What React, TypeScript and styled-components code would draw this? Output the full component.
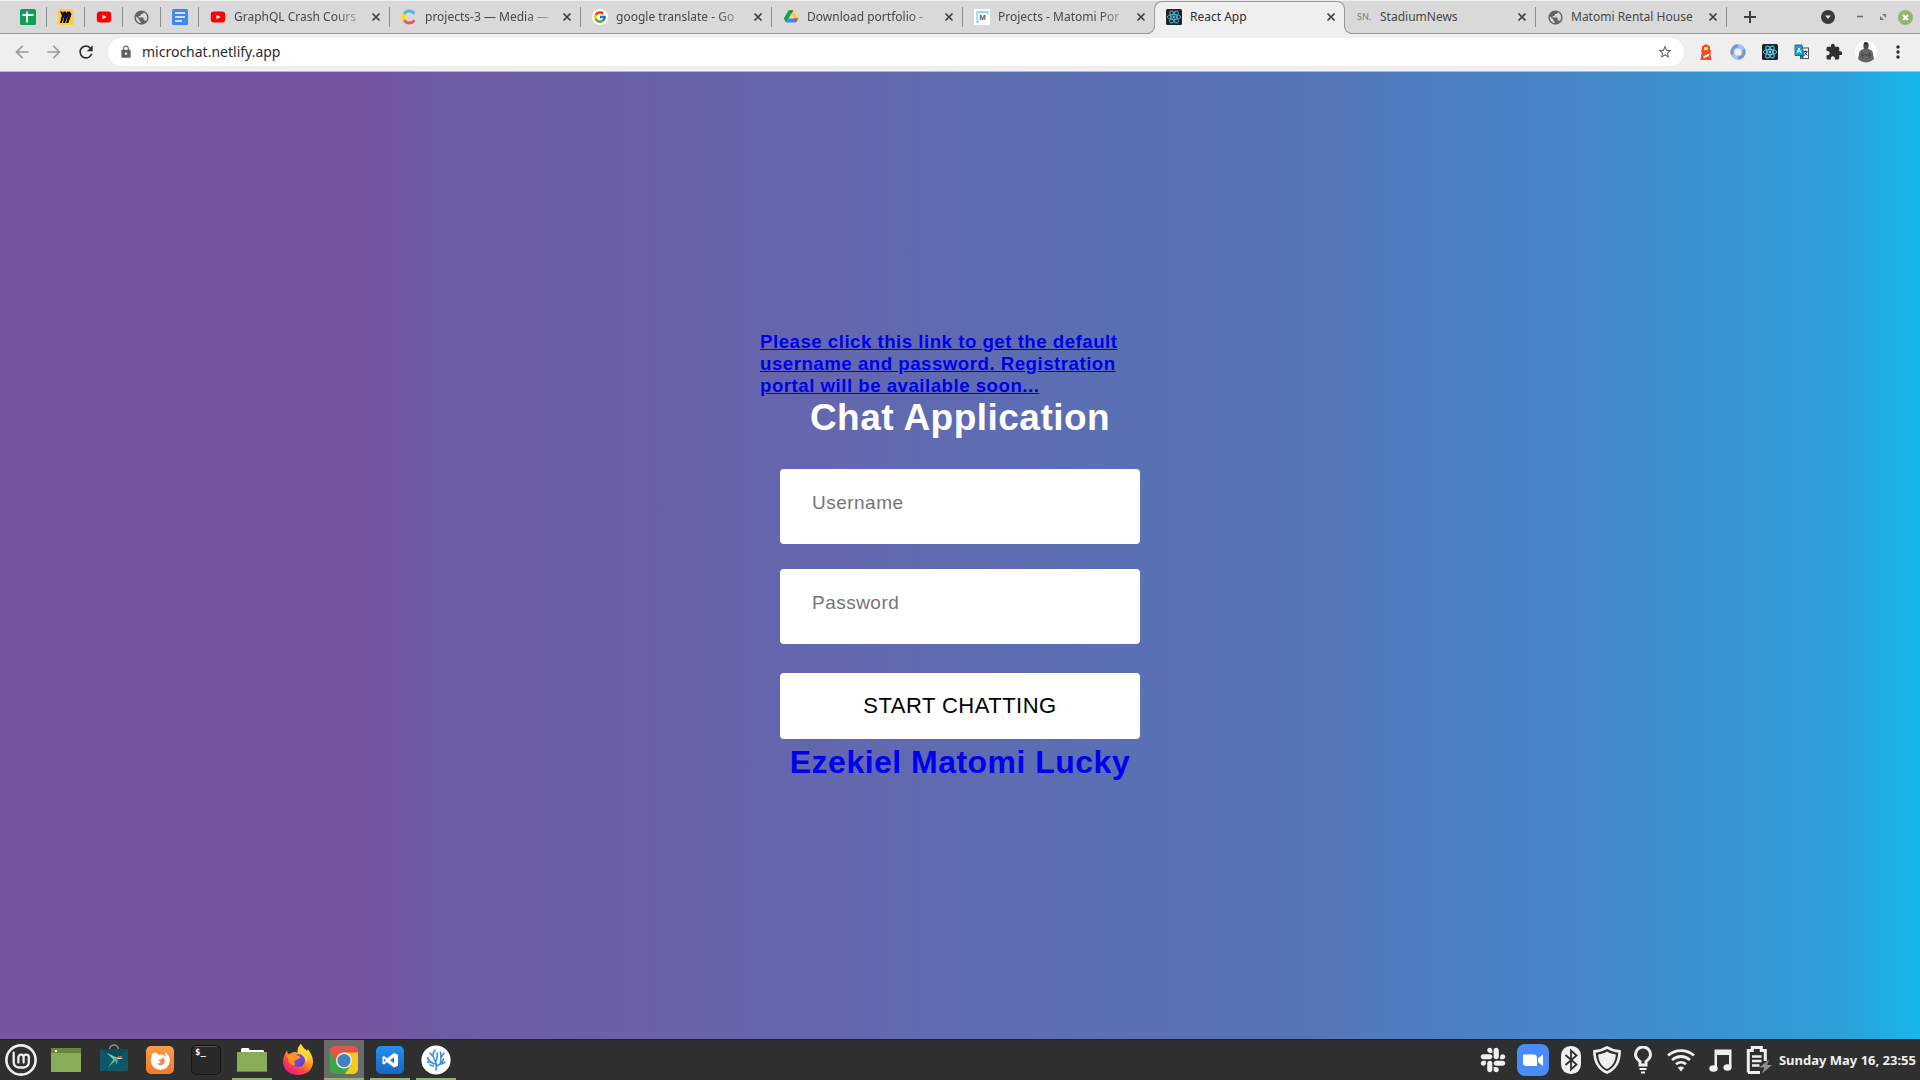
import React from "react";
import styled, { createGlobalStyle, css } from "styled-components";
import {
  MdArrowBack,
  MdArrowForward,
  MdRefresh,
  MdLock,
  MdStarBorder,
  MdExtension,
  MdMoreVert,
  MdPublic,
} from "react-icons/md";
import { FaSlack } from "react-icons/fa";
import { FcGoogle } from "react-icons/fc";

const uiFont = `"Noto Sans", "Open Sans", sans-serif`;
const pageFont = `"Liberation Sans", Arial, sans-serif`;

const GlobalStyle = createGlobalStyle`
  *, *::before, *::after { box-sizing: border-box; }
  body { margin: 0; font-family: ${uiFont}; }
  button, input { font: inherit; color: inherit; letter-spacing: inherit; margin: 0; }
  button { border: 0; padding: 0; background: none; cursor: pointer; }
  svg { display: block; flex: none; }
`;

const Screen = styled.div`
  min-height: 100vh;
  display: grid;
  grid-template-rows: auto 1fr auto;
`;

/* ---------- browser chrome ---------- */

const TabStrip = styled.header`
  display: flex;
  align-items: stretch;
  height: 34px;
  padding: 0 7px 0 9px;
  background: #d9d9d9;
  border-top: 1px solid #efefef;
  border-bottom: 1px solid #999;
`;

const Tabs = styled.nav`
  display: flex;
  flex: 0 1 auto;
  min-width: 0;
`;

const divider = css`
  &::after {
    content: "";
    width: 1px;
    height: 20px;
    background: #8c8c8c;
    flex: none;
  }
`;

const PinnedTab = styled.button`
  width: 38px;
  display: flex;
  align-items: center;
  & > span {
    flex: 1;
    display: flex;
    justify-content: center;
  }
  ${divider}
`;

const Tab = styled.div<{ $active?: boolean; $divided?: boolean }>`
  position: relative;
  flex: 0 1 191px;
  width: 191px;
  min-width: 0;
  display: flex;
  align-items: center;
  color: #484848;
  ${(p) => p.$divided && divider}
  ${(p) =>
    p.$active &&
    css`
      margin-bottom: -1px;
      padding-bottom: 2px;
      color: #2e2e2e;
      background: #efefef;
      border: 1px solid #999;
      border-bottom: 0;
      border-radius: 8px 8px 0 0;
    `}
`;

const TabFoot = styled.i<{ $side: "left" | "right" }>`
  position: absolute;
  bottom: 0;
  width: 8px;
  height: 8px;
  border-bottom: 1px solid #999;
  background: #d9d9d9;
  ${(p) =>
    p.$side === "left"
      ? css`
          left: -8px;
          border-right: 1px solid #999;
          border-bottom-right-radius: 8px;
          box-shadow: 2px 2px 0 0 #efefef;
          clip-path: inset(0 -1px 0 0);
        `
      : css`
          right: -8px;
          border-left: 1px solid #999;
          border-bottom-left-radius: 8px;
          box-shadow: -2px 2px 0 0 #efefef;
          clip-path: inset(0 0 0 -1px);
        `}
`;

const TabButton = styled.button`
  flex: 1;
  min-width: 0;
  height: 100%;
  display: flex;
  align-items: center;
  gap: 8px;
  padding-left: 11px;
  text-align: left;
`;

const TabTitle = styled.span<{ $fade?: boolean }>`
  flex: 1;
  min-width: 0;
  overflow: hidden;
  white-space: nowrap;
  font-size: 12px;
  line-height: 18px;
  ${(p) => p.$fade && css`mask-image: linear-gradient(90deg, #000 78%, transparent 102%);`}
`;

const CloseButton = styled.button`
  width: 16px;
  height: 16px;
  margin: 0 5px 0 4px;
  display: grid;
  place-items: center;
  color: #3d3d3d;
`;

const Favicon = styled.span`
  width: 16px;
  height: 16px;
  flex: none;
  display: grid;
  place-items: center;
`;

const Monogram = styled.span`
  font: 9px/16px Lato, sans-serif;
  color: #777;
`;

const NewTab = styled.button`
  width: 46px;
  display: grid;
  place-items: center;
  color: #3d3d3d;
`;

const WindowControls = styled.div`
  margin-left: auto;
  display: flex;
  align-items: center;
  gap: 8px;
`;

const ControlButton = styled.button<{ $wide?: boolean }>`
  width: 15px;
  height: 16px;
  margin-right: ${(p) => (p.$wide ? "9px" : "0")};
  display: grid;
  place-items: center;
  color: #6a6a6a;
`;

const Toolbar = styled.div`
  display: flex;
  align-items: center;
  height: 38px;
  padding: 0 6px 1px;
  background: #efefef;
  border-bottom: 1px solid #b9b9b9;
`;

const ToolButton = styled.button<{ $muted?: boolean }>`
  width: 32px;
  height: 28px;
  display: grid;
  place-items: center;
  color: ${(p) => (p.$muted ? "#9c9c9c" : "#2f2f2f")};
`;

const AddressBar = styled.label`
  flex: 1;
  display: flex;
  align-items: center;
  gap: 9px;
  height: 28px;
  margin: 0 6px;
  padding: 0 11px;
  border-radius: 14px;
  background: #fff;
  color: #5f6063;
`;

const AddressInput = styled.input`
  flex: 1;
  min-width: 0;
  border: 0;
  outline: 0;
  padding: 0;
  background: transparent;
  font-size: 14px;
  line-height: 20px;
  color: #2b2b2b;
`;

/* ---------- page ---------- */

const Page = styled.main`
  display: flex;
  align-items: center;
  justify-content: center;
  background: linear-gradient(
    90deg,
    rgb(117, 84, 160) 0%,
    rgb(117, 84, 160) 19%,
    rgb(110, 92, 165) 23%,
    rgb(103, 100, 172) 38%,
    rgb(95, 107, 177) 50%,
    rgb(85, 117, 183) 68%,
    rgb(79, 124, 192) 73%,
    rgb(70, 135, 200) 82%,
    rgb(44, 160, 218) 96%,
    rgb(22, 184, 235) 100%
  );
`;

const Panel = styled.section`
  width: 400px;
  font-family: ${pageFont};
  font-size: 16px;
  letter-spacing: 0.03em;
`;

const Notice = styled.h3`
  margin: 0;
  line-height: 22px;
  a {
    color: #0000ee;
  }
`;

const Title = styled.h1`
  margin: 0 0 30px;
  font-size: 37px;
  line-height: 42px;
  color: #fff;
  text-align: center;
`;

const Form = styled.form`
  display: flex;
  flex-direction: column;
  padding: 0 20px;
  gap: 25px;
`;

const Field = styled.input`
  height: 75px;
  padding: 0 32px 6px;
  border: 0;
  border-radius: 4px;
  background: #fff;
  font-size: 19px;
  outline: 0;
  &::placeholder {
    color: #757575;
  }
`;

const Submit = styled.button`
  height: 66px;
  margin-top: 4px;
  border-radius: 4px;
  background: #fff;
  color: #000;
  font-size: 22px;
`;

const Author = styled.h1`
  margin: 5px 0 0;
  font-size: 32px;
  line-height: 37px;
  text-align: center;
  a {
    color: #0000ee;
    text-decoration: none;
  }
`;

/* ---------- desktop panel ---------- */

const Taskbar = styled.footer`
  display: flex;
  justify-content: space-between;
  height: 41px;
  padding: 0 4px 0 1px;
  background: #2f2f2f;
  border-top: 1px solid #232323;
`;

const Launchers = styled.div`
  display: flex;
  gap: 6px;
`;

const MenuGroup = styled.div`
  display: flex;
  gap: 5px;
  margin-right: 2px;
`;

const Launcher = styled.button<{ $running?: boolean; $focused?: boolean }>`
  width: 40px;
  display: grid;
  place-items: center;
  background: ${(p) => (p.$focused ? "#6b6b6b" : "transparent")};
  border-top: 2px solid transparent;
  border-bottom: 2px solid ${(p) => (p.$running ? "#92b372" : "transparent")};
`;

const Tray = styled.div`
  display: flex;
  align-items: center;
  gap: 10px;
`;

const TrayButton = styled.button`
  color: #efefef;
`;

const Clock = styled.time`
  margin-left: -4px;
  font-size: 13px;
  font-weight: 700;
  line-height: 18px;
  color: #efefef;
  white-space: nowrap;
`;

/* ---------- favicons ---------- */

const SheetsIcon = () => (
  <svg width="16" height="16" viewBox="0 0 16 16">
    <rect width="16" height="16" rx="1.5" fill="#109d58" />
    <path d="M7 2.5v11M2.5 6h11" stroke="#fff" strokeWidth="2" />
  </svg>
);

const MiroIcon = () => (
  <svg width="16" height="16" viewBox="0 0 16 16">
    <rect width="16" height="16" rx="1.5" fill="#ffd02f" />
    <path
      d="M2 2.5h2.2l1 2 .2-2h2.2l1.3 1.8.1-1.8h2.6l2 2.6L10.3 14H8.1l1.9-7.5L7 14H5l1.5-7.8L3.8 14H1.9l2-7.5z"
      fill="#0b0a33"
    />
  </svg>
);

const YoutubeIcon = () => (
  <svg width="16" height="16" viewBox="0 0 16 16">
    <rect x="0.8" y="2.5" width="14.4" height="11" rx="3" fill="#f00" />
    <path d="M6.5 5.7v4.6l4-2.3z" fill="#fff" />
  </svg>
);

const DocsIcon = () => (
  <svg width="16" height="16" viewBox="0 0 16 16">
    <rect width="16" height="16" rx="1.5" fill="#4285f4" />
    <path d="M3 4h10M3 8h10M3 12h7" stroke="#fff" strokeWidth="1.6" />
  </svg>
);

const GlobeIcon = () => <MdPublic size={17} color="#5f6368" />;

const ContentfulIcon = () => (
  <svg width="16" height="16" viewBox="0 0 16 16" fill="none" strokeWidth="3">
    <path d="M4 12.2a6 6 0 0 1 0-8.4" stroke="#ffda00" />
    <path d="M4 3.8a6 6 0 0 1 8.5 0" stroke="#4fb5e1" strokeLinecap="round" />
    <path d="M4 12.2a6 6 0 0 0 8.5 0" stroke="#f0575a" strokeLinecap="round" />
  </svg>
);

const GoogleIcon = () => (
  <svg width="16" height="16" viewBox="0 0 16 16">
    <circle cx="8" cy="8" r="8" fill="#fff" />
    <FcGoogle x="1" y="1" size={14} />
  </svg>
);

const DriveIcon = () => (
  <svg width="16" height="16" viewBox="0 0 16 16">
    <path d="M5.6 1.2.8 9.600l2.300 4 5-8.600z" fill="#0f9d58" />
    <path d="M5.6 1.2h4.800l4.900 8.400h-4.700z" fill="#ffcd40" />
    <path d="M5.300 9.600h10l-2.400 4H3.100z" fill="#4285f4" />
    <path d="M10.600 9.600h4.700l-2.400 4z" fill="#ea4335" />
    <path d="M5.600 1.200h4.800L8 5.200z" fill="#188038" />
  </svg>
);

const MatomiIcon = () => (
  <svg width="16" height="16" viewBox="0 0 16 16">
    <rect width="16" height="16" fill="#fff" />
    <path d="M5 13H3V3h11v2" stroke="#6edad8" strokeWidth="1.3" fill="none" />
    <text x="8.500" y="10.500" fontSize="7" fontWeight="700" textAnchor="middle" fill="#555">M</text>
  </svg>
);

const ReactTile = ({ tint = "#4cb8d6" }: { tint?: string }) => (
  <svg width="16" height="16" viewBox="0 0 16 16" fill="none">
    <rect width="16" height="16" rx="1.5" fill="#20232a" />
    <g stroke={tint} strokeWidth="0.9">
      <ellipse cx="8" cy="8" rx="6.700" ry="2.600" />
      <ellipse cx="8" cy="8" rx="6.700" ry="2.600" transform="rotate(60 8 8)" />
      <ellipse cx="8" cy="8" rx="6.700" ry="2.600" transform="rotate(120 8 8)" />
    </g>
    <circle cx="8" cy="8" r="1.400" fill={tint} />
  </svg>
);

const CrossIcon = () => (
  <svg width="10" height="10" viewBox="0 0 10 10">
    <path d="m1.500 1.500 7 7m0-7-7 7" stroke="currentColor" strokeWidth="1.700" />
  </svg>
);

const PlusIcon = () => (
  <svg width="12" height="12" viewBox="0 0 12 12">
    <path d="M6 0v12M0 6h12" stroke="currentColor" strokeWidth="2" />
  </svg>
);

/* ---------- window controls ---------- */

const TabSearchIcon = () => (
  <svg width="14" height="14" viewBox="0 0 14 14">
    <circle cx="7" cy="7" r="7" fill="#3a3a3a" />
    <path d="M4 5.500h6L7 9z" fill="#e2e2e2" />
  </svg>
);

const MinimiseIcon = () => (
  <svg width="8" height="8" viewBox="0 0 8 8">
    <path d="M1 3.500h6" stroke="#6a6a6a" strokeWidth="1.600" />
  </svg>
);

const RestoreIcon = () => (
  <svg width="8" height="8" viewBox="0 0 8 8">
    <path d="M3 1h4v4zM1 3l4 4H1z" fill="#777" />
  </svg>
);

const WindowCloseIcon = () => (
  <svg width="15" height="15" viewBox="0 0 15 15">
    <circle cx="7.500" cy="7.500" r="7.500" fill="#92b372" />
    <path d="m5 5 5 5m0-5-5 5" stroke="#fff" strokeWidth="2" />
  </svg>
);

/* ---------- extensions ---------- */

const LighthouseIcon = () => (
  <svg width="16" height="16" viewBox="0 0 16 16">
    <path d="M8 0 12 2.600V6h1v1.500h-.8L13.500 16h-11l1.300-8.500H3V6h1V2.600z" fill="#f4492a" />
    <rect x="6" y="3" width="4" height="3.200" rx="1" fill="#ffdf66" />
    <path d="m5.500 12 6-2.500-.4 2.500-5.800 2.200z" fill="#fff" />
  </svg>
);

const JsonIcon = () => (
  <svg width="16" height="16" viewBox="0 0 16 16" fill="none">
    <circle cx="8" cy="8" r="5.700" stroke="#a9c4e2" strokeWidth="4.400" />
    <path d="M2.500 10.500A6 6 0 0 1 8 2" stroke="#7798c6" strokeWidth="2.800" />
    <path d="M13.500 5.500A6 6 0 0 1 8 14" stroke="#7798c6" strokeWidth="2.800" />
  </svg>
);

const TranslateIcon = () => (
  <svg width="16" height="16" viewBox="0 0 16 16">
    <rect x="6.500" y="4" width="8" height="10.500" fill="#f5f5f5" stroke="#555" />
    <path d="M9.500 7.500h4m-2-1v1m1.500 0c-.5 2-2 3.500-3.500 4m1-3 3 3" stroke="#444" fill="none" />
    <path d="M1 1h7l2 10.500H1z" fill="#0ba5e9" stroke="#25506b" strokeWidth="0.800" />
    <path d="m3 9 1.900-5L7 9M3.700 7.500h2.600" stroke="#fff" fill="none" />
    <path d="M6 11.500h4L8.500 15z" fill="#0863a5" />
  </svg>
);

const AvatarIcon = () => (
  <svg width="22" height="22" viewBox="0 0 22 22">
    <circle cx="11" cy="11" r="11" fill="#fff" />
    <path d="M9 7.500 4.600 10 3 18a11 11 0 0 0 16 0l-1.600-8L13 7.500z" fill="#666" />
    <path d="M6 14.500c3-1 7-1 10 0M7.500 11v6m7-6v6" stroke="#444" fill="none" />
    <ellipse cx="11" cy="4.800" rx="2.600" ry="3.800" fill="#4d4d4d" />
    <path d="M8.500 3.500a2.600 2.600 0 0 1 5 0z" fill="#222" />
  </svg>
);

/* ---------- launcher icons ---------- */

const MintIcon = () => (
  <svg width="32" height="32" viewBox="0 0 32 32" fill="none" stroke="#efefef">
    <circle cx="16" cy="16" r="14.600" strokeWidth="2.600" />
    <path
      d="M8.700 8.700V18.500a5 5 0 0 0 5 5H18.800a5 5 0 0 0 5-5V13.300a2.600 2.600 0 0 0-5.200 0V18.500M18.600 13.300a2.600 2.600 0 0 0-5.200 0V18.500"
      strokeWidth="2.300"
      strokeLinecap="round"
    />
  </svg>
);

const DesktopIcon = () => (
  <svg width="30" height="24" viewBox="0 0 30 24">
    <rect width="30" height="24" fill="#8aad59" />
    <rect width="30" height="5" fill="#68873f" />
    <rect x="4" y="2" width="2" height="2" fill="#fff" />
  </svg>
);

const StoreIcon = () => (
  <svg width="28" height="32" viewBox="0 0 28 32">
    <path d="M9.500 8V5.500a4.500 4.500 0 0 1 9 0V8" fill="none" stroke="#8f9a9c" strokeWidth="1.400" />
    <rect y="5" width="28" height="22" rx="1.500" fill="#0e5769" />
    <path d="M0 5h28L14 17z" fill="#0a4c5d" />
    <path d="M6 8.500 18 14 8 23.500l5.500-8z" fill="#7fc6a0" />
    <path d="M18 13l-4 2 3 6z" fill="#54a795" />
    <path d="M17 13.500h4l1.500 1.200L18 15z" fill="#cfe5dc" />
    <path d="M18 12h3.500l1.500 2.500-4-1z" fill="#e95420" />
  </svg>
);

const FirefoxTile = () => (
  <svg width="28" height="28" viewBox="0 0 28 28">
    <defs>
      <linearGradient id="tileOrange" x1="0" y1="0" x2="0" y2="1">
        <stop offset="0" stopColor="#fb9c4c" />
        <stop offset="1" stopColor="#ee7a2e" />
      </linearGradient>
    </defs>
    <rect width="28" height="28" rx="5" fill="url(#tileOrange)" />
    <circle cx="14.300" cy="14.500" r="9.500" fill="#fff" />
    <path d="M15 4.500c4 1 5 3 4.500 6.500-1-2-3-2.500-5-2.500l-4 1L9 4z" fill="#f58f40" />
    <path d="M13 13.500c2 .5 4-1 4-2.500 2 2 2.500 5 .5 7s-5 1.500-6.500-.5c2 0 3-.5 4-1.500-1.500 0-2.500-1-2-2.500z" fill="#f58b3c" />
    <path d="M5.500 8c1.500-1.500 5-1.500 7 0l-1.500 4-4 1z" fill="#fff" />
  </svg>
);

const TerminalIcon = () => (
  <svg width="30" height="30" viewBox="0 0 30 30">
    <rect x="0.500" y="0.500" width="29" height="29" rx="5" fill="#292929" stroke="#161616" />
    <path d="M4 1.500h22" stroke="#555" />
    <text x="4" y="10" fontFamily="DejaVu Sans Mono, monospace" fontWeight="700" fontSize="9" fill="#fff">$_</text>
  </svg>
);

const FolderIcon = () => (
  <svg width="30" height="26" viewBox="0 0 30 26">
    <path d="M4 6V2.500Q4 1 5.500 1H11q1.500 0 1.500 2H26q1 0 1 1.500V8H4z" fill="#fff" />
    <rect y="5" width="30" height="20" rx="1" fill="#8aad59" />
    <path d="M0 24.500h30" stroke="#68873f" />
  </svg>
);

const FirefoxIcon = () => (
  <svg width="30" height="32" viewBox="0 0 30 32">
    <defs>
      <linearGradient id="foxBody" x1="0.850" y1="0.100" x2="0.200" y2="1">
        <stop offset="0" stopColor="#fff44f" />
        <stop offset="0.350" stopColor="#ffa61f" />
        <stop offset="0.650" stopColor="#ff4a3d" />
        <stop offset="1" stopColor="#e3158b" />
      </linearGradient>
      <linearGradient id="foxCore" x1="0" y1="0" x2="1" y2="1">
        <stop offset="0" stopColor="#9059ff" />
        <stop offset="1" stopColor="#5b3bb8" />
      </linearGradient>
    </defs>
    <path
      d="M18 0c1 3 4 5 6 7l.8-2c3 4 5.200 8 5.200 12.500C30 26 23.500 31 15 31S0 26 0 17.500C0 13 2 9 4 6.500L5 10l3.500-1c1.500-1 4-1.500 6-.5C14 5 15.500 2 18 0z"
      fill="url(#foxBody)"
    />
    <circle cx="15.500" cy="16.500" r="6.500" fill="url(#foxCore)" />
    <path d="M3.500 8.500 6 11c3-1.500 6-1.500 8.500.5l3 1.500c-1 2-3.500 2-5 3s-2 3.500 0 5c-4 1-7-1.500-7-5C5 13 3 12 3.500 8.500z" fill="#ff9420" />
    <path d="M18 0c1 3 4 5 6 7 2 4 1 9-1 12 0-5-3-8-6-9.500S15 3 18 0z" fill="#ffd93b" />
  </svg>
);

const ChromeIcon = () => (
  <svg width="28" height="28" viewBox="0 0 28 28">
    <defs>
      <clipPath id="chromeTile">
        <rect width="28" height="28" rx="5" />
      </clipPath>
    </defs>
    <g clipPath="url(#chromeTile)">
      <rect width="28" height="28" fill="#3fa648" />
      <path d="M14 6h14v22H15l6.500-10z" fill="#f7c91d" />
      <path d="M0 0h28v6.500H14L6.500 18 0 6z" fill="#e2554a" />
      <path d="M0 5 7 18l7 4-3 6H0z" fill="#3fa648" />
    </g>
    <circle cx="14" cy="14.500" r="8" fill="#f3f3f3" />
    <circle cx="14" cy="14.500" r="6.600" fill="#4383bd" />
  </svg>
);

const CodeIcon = () => (
  <svg width="28" height="28" viewBox="0 0 28 28">
    <defs>
      <linearGradient id="codeBlue" x1="0" y1="0" x2="0" y2="1">
        <stop offset="0" stopColor="#2391ee" />
        <stop offset="1" stopColor="#1866c2" />
      </linearGradient>
    </defs>
    <rect width="28" height="28" rx="5" fill="url(#codeBlue)" />
    <path
      d="m18 7 4 1.800v10.900L18 21.500l-7-5.300-3 2.300-1.500-.8v-6.900L8 10l3 2.300zM18 11.300l-4 2.950 4 2.950zM8 12.500v3.500l1.800-1.750z"
      fill="#fff"
      fillRule="evenodd"
    />
  </svg>
);

const CoralIcon = () => (
  <svg width="30" height="30" viewBox="0 0 30 30">
    <circle cx="15" cy="15" r="14.600" fill="#fff" />
    <g fill="none" stroke="#3a8ee6" strokeWidth="1.600" strokeLinecap="round">
      <path d="M15 25c0-3 1-4 0-7s-3-5-3-8 1-3 2-5M15 19c-3 0-7-2-8-6M9 16c-2 0-2-2-2.500-3M10 17c-2 0-3 1-3.500 0" />
      <path d="M15.500 21c3-1 6-3 7-7m-3 4c0-4 1-7 0-11M20 12c2-1 2-3 3-4M15 16c1-3 2-6 1-8M11.500 11 9 8M20 19c2 0 3-1 4-2M12.500 21 9 20" />
    </g>
  </svg>
);

/* ---------- tray icons ---------- */

const ZoomIcon = () => (
  <svg width="32" height="32" viewBox="0 0 32 32">
    <rect width="32" height="32" rx="8" fill="#4a8cf7" />
    <path d="M6 10.500h10.500a3.500 3.500 0 0 1 3.500 3.500v8H9.500A3.500 3.500 0 0 1 6 18.500zM21 14.500l5-4v11.500l-5-4z" fill="#fff" />
  </svg>
);

const BluetoothIcon = () => (
  <svg width="24" height="28" viewBox="0 0 24 28">
    <rect x="2" width="20" height="28" rx="9.500" fill="#efefef" />
    <path d="m6.500 9 11 9.500-5.500 5V4.500l5.500 5-11 9.500" fill="none" stroke="#2f2f2f" strokeWidth="1.800" />
  </svg>
);

const ShieldIcon = () => (
  <svg width="28" height="28" viewBox="0 0 28 28">
    <path d="M14 1.400c4 2.600 8 3.600 12.600 4C26.500 15 23 22.500 14 26.500 5 22.500 1.500 15 1.400 5.400 6 5 10 4 14 1.400z" fill="none" stroke="#efefef" strokeWidth="2.600" />
    <path d="M14 5.500c3 1.800 5.500 2.500 8.800 2.900-.3 6.600-3 11.600-8.800 14.600-5.800-3-8.500-8-8.800-14.600 3.300-.4 5.800-1.100 8.800-2.900z" fill="#efefef" />
  </svg>
);

const BulbIcon = () => (
  <svg width="24" height="28" viewBox="0 0 24 28">
    <path d="M9 19v-3.500C6.500 13.500 4.500 12 4.500 8.500a7.500 7.500 0 0 1 15 0c0 3.500-2 5-4.500 7V19z" fill="none" stroke="#efefef" strokeWidth="3" />
    <path d="M8.500 23h7M10 26.500h4" stroke="#efefef" strokeWidth="2" />
  </svg>
);

const WifiIcon = () => (
  <svg width="32" height="28" viewBox="0 0 32 28" fill="none" stroke="#efefef" strokeWidth="2.800">
    <path d="M3 9.500C10.500 3 21.500 3 29 9.500M7 14c5.500-4.700 12.500-4.700 18 0M11 18.300c3-2.600 7-2.600 10 0" />
    <path d="m12.800 21.500 3.200 4 3.200-4c-1.800-1.500-4.600-1.500-6.400 0z" fill="#efefef" stroke="none" />
  </svg>
);

const MusicIcon = () => (
  <svg width="28" height="28" viewBox="0 0 28 28">
    <path d="M7.500 3.500h17v18H22V9H10v13H7.500z" fill="#efefef" />
    <ellipse cx="6.500" cy="22.500" rx="4.200" ry="3.200" fill="#efefef" />
    <ellipse cx="20.500" cy="21.500" rx="4" ry="3.200" fill="#efefef" />
  </svg>
);

const BatteryIcon = () => (
  <svg width="28" height="28" viewBox="0 0 28 28">
    <path d="M3.300 26.500V4.500h4V1.500h9v3h4V15M3 26.500h12" fill="none" stroke="#efefef" strokeWidth="3" />
    <path d="M7 10.500h9.500M7 15h9.500M7 19.500h7.500" stroke="#efefef" strokeWidth="2.600" />
    <path d="m24 13.500-9.500 8h5L17 27.500l10-8.500h-5z" fill="#909090" />
  </svg>
);

/* ---------- data ---------- */

const pinnedTabs = [
  { name: "Spreadsheet", icon: <SheetsIcon /> },
  { name: "Miro", icon: <MiroIcon /> },
  { name: "YouTube", icon: <YoutubeIcon /> },
  { name: "Website", icon: <GlobeIcon /> },
  { name: "Document", icon: <DocsIcon /> },
];

const tabs = [
  { title: "GraphQL Crash Cours", icon: <YoutubeIcon />, divided: true, fade: true },
  { title: "projects-3 — Media —", icon: <ContentfulIcon />, divided: true, fade: true },
  { title: "google translate - Go", icon: <GoogleIcon />, divided: true, fade: true },
  { title: "Download portfolio -", icon: <DriveIcon />, divided: true, fade: true },
  { title: "Projects - Matomi Por", icon: <MatomiIcon />, fade: true },
  { title: "React App", icon: <ReactTile />, active: true },
  { title: "StadiumNews", icon: <Monogram>SN.</Monogram>, divided: true },
  { title: "Matomi Rental House", icon: <GlobeIcon />, divided: true },
];

const extensions = [
  { name: "Lighthouse", icon: <LighthouseIcon /> },
  { name: "JSON viewer", icon: <JsonIcon /> },
  { name: "React Developer Tools", icon: <ReactTile tint="#61dafb" /> },
  { name: "Translate", icon: <TranslateIcon /> },
  { name: "Extensions", icon: <MdExtension size={18} /> },
  { name: "Profile", icon: <AvatarIcon /> },
  { name: "Menu", icon: <MdMoreVert size={20} /> },
];

const launchers = [
  { name: "Software", icon: <StoreIcon /> },
  { name: "Firefox web app", icon: <FirefoxTile /> },
  { name: "Terminal", icon: <TerminalIcon /> },
  { name: "Files", icon: <FolderIcon />, running: true },
  { name: "Firefox", icon: <FirefoxIcon /> },
  { name: "Chrome", icon: <ChromeIcon />, running: true, focused: true },
  { name: "Code", icon: <CodeIcon />, running: true },
  { name: "Coral", icon: <CoralIcon />, running: true },
];

const trayItems = [
  { name: "Slack", icon: <FaSlack size={28} /> },
  { name: "Zoom", icon: <ZoomIcon /> },
  { name: "Bluetooth", icon: <BluetoothIcon /> },
  { name: "Updates", icon: <ShieldIcon /> },
  { name: "Night light", icon: <BulbIcon /> },
  { name: "Network", icon: <WifiIcon /> },
  { name: "Sound", icon: <MusicIcon /> },
  { name: "Battery", icon: <BatteryIcon /> },
];

export default function App() {
  return (
    <Screen>
      <GlobalStyle />
      <div>
        <TabStrip>
          <Tabs>
            {pinnedTabs.map((t) => (
              <PinnedTab key={t.name} aria-label={t.name}>
                <span>{t.icon}</span>
              </PinnedTab>
            ))}
            {tabs.map((t) => (
              <Tab key={t.title} $active={t.active} $divided={t.divided}>
                {t.active && <TabFoot $side="left" />}
                <TabButton>
                  <Favicon>{t.icon}</Favicon>
                  <TabTitle $fade={t.fade}>{t.title}</TabTitle>
                </TabButton>
                <CloseButton aria-label={`Close ${t.title}`}>
                  <CrossIcon />
                </CloseButton>
                {t.active && <TabFoot $side="right" />}
              </Tab>
            ))}
          </Tabs>
          <NewTab aria-label="New tab">
            <PlusIcon />
          </NewTab>
          <WindowControls>
            <ControlButton $wide aria-label="Search tabs">
              <TabSearchIcon />
            </ControlButton>
            <ControlButton aria-label="Minimise">
              <MinimiseIcon />
            </ControlButton>
            <ControlButton aria-label="Restore">
              <RestoreIcon />
            </ControlButton>
            <ControlButton aria-label="Close window">
              <WindowCloseIcon />
            </ControlButton>
          </WindowControls>
        </TabStrip>
        <Toolbar>
          <ToolButton $muted aria-label="Back">
            <MdArrowBack size={20} />
          </ToolButton>
          <ToolButton $muted aria-label="Forward">
            <MdArrowForward size={20} />
          </ToolButton>
          <ToolButton aria-label="Reload">
            <MdRefresh size={20} />
          </ToolButton>
          <AddressBar>
            <MdLock size={14} />
            <AddressInput aria-label="Address" defaultValue="microchat.netlify.app" />
            <MdStarBorder size={16} />
          </AddressBar>
          {extensions.map((e) => (
            <ToolButton key={e.name} aria-label={e.name}>
              {e.icon}
            </ToolButton>
          ))}
        </Toolbar>
      </div>

      <Page>
        <Panel>
          <Notice>
            <a href="#credentials">
              Please click this link to get the default username and password. Registration portal
              will be available soon...
            </a>
          </Notice>
          <Title>Chat Application</Title>
          <Form onSubmit={(e) => e.preventDefault()}>
            <Field type="text" placeholder="Username" aria-label="Username" />
            <Field type="password" placeholder="Password" aria-label="Password" />
            <Submit type="submit">START CHATTING</Submit>
          </Form>
          <Author>
            <a href="#author">Ezekiel Matomi Lucky</a>
          </Author>
        </Panel>
      </Page>

      <Taskbar>
        <Launchers>
          <MenuGroup>
            <Launcher aria-label="Menu">
              <MintIcon />
            </Launcher>
            <Launcher aria-label="Show desktop">
              <DesktopIcon />
            </Launcher>
          </MenuGroup>
          {launchers.map((l) => (
            <Launcher key={l.name} aria-label={l.name} $running={l.running} $focused={l.focused}>
              {l.icon}
            </Launcher>
          ))}
        </Launchers>
        <Tray>
          {trayItems.map((t) => (
            <TrayButton key={t.name} aria-label={t.name}>
              {t.icon}
            </TrayButton>
          ))}
          <Clock>Sunday May 16, 23:55</Clock>
        </Tray>
      </Taskbar>
    </Screen>
  );
}
